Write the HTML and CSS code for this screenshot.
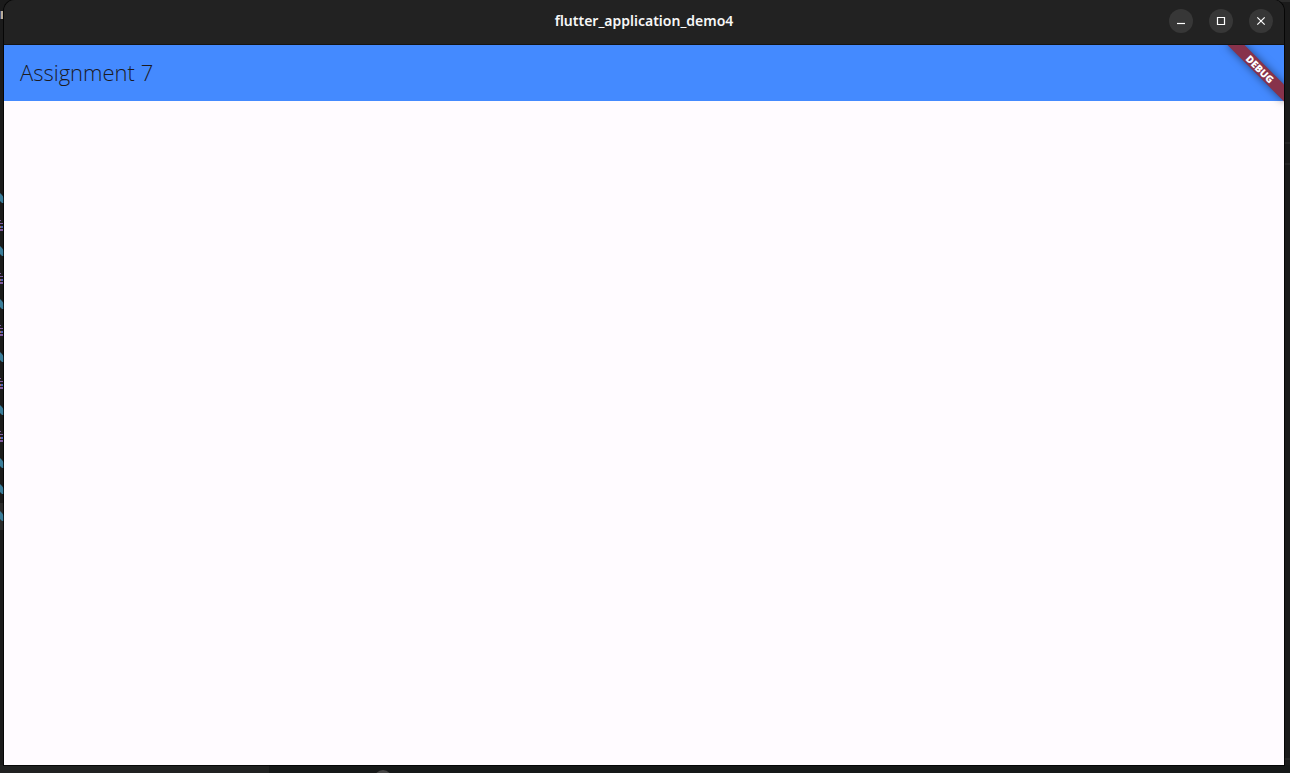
FILE: index.html
```html
<!DOCTYPE html>
<html lang="en">
<head>
<meta charset="utf-8">
<meta name="viewport" content="width=device-width, initial-scale=1">
<title>flutter_application_demo4</title>
<link rel="stylesheet" href="styles.css">
</head>
<body>
<!-- Editor showing behind the window edges -->
<svg class="backdrop" aria-hidden="true">
  <defs>
    <path id="dart" d="M0 -5L2 -3L4 0V5H2L0 3Z" fill="#3b7c99"/>
    <g id="lines">
      <path d="M0 -6h1v1h-1zM0 -3h3v1h-3zM0 3h3v2h-3z" fill="#815ba0"/>
      <path d="M0 0h1v2h-1z" fill="#a26b62"/>
      <path d="M1 0h2v2h-2z" fill="#4e63b3"/>
    </g>
  </defs>
  <rect y="503" width="4" height="27" fill="#2b2b2b"/>
  <path d="M0 11h1v8h-1z" fill="#465277"/>
  <path d="M1 11h2v8h-2z" fill="#b8ab98"/>
  <use href="#dart" y="198"/><use href="#lines" y="226"/>
  <use href="#dart" y="251"/><use href="#lines" y="279"/>
  <use href="#dart" y="304"/><use href="#lines" y="331"/>
  <use href="#dart" y="357"/><use href="#lines" y="384"/>
  <use href="#dart" y="410"/><use href="#lines" y="437"/>
  <use href="#dart" y="463"/><use href="#dart" y="489"/><use href="#dart" y="516"/>
  <rect y="765" width="269" height="8" fill="#202121"/>
  <rect x="269" y="765" width="100%" height="8" fill="#161818"/>
  <circle cx="383" cy="779" r="9" fill="#464646"/>
  <rect x="1200" width="90" height="2" fill="#2b2b2b"/>
  <path d="M1284 143h6M1284 164h6M1284 759h6" stroke="#303030"/>
</svg>
<div class="window">
  <header class="titlebar">
    <h1 class="title">flutter_application_demo4</h1>
    <div class="controls">
      <button class="control" type="button" aria-label="Minimize">
        <svg viewBox="0 0 24 24"><path d="M8 14.5h8"/></svg>
      </button>
      <button class="control" type="button" aria-label="Maximize">
        <svg viewBox="0 0 24 24"><path d="M8.5 8.5h7v7h-7z"/></svg>
      </button>
      <button class="control" type="button" aria-label="Close">
        <svg viewBox="0 0 24 24"><path d="M8.3 8.3l7.4 7.4M15.7 8.3l-7.4 7.4"/></svg>
      </button>
    </div>
  </header>
  <div class="appbar">
    <h2 class="heading">Assignment 7</h2>
    <div class="corner"><span class="ribbon">DEBUG</span></div>
  </div>
  <main class="content"></main>
</div>
</body>
</html>
```
FILE: styles.css
```css
* {
  box-sizing: border-box;
}

body {
  margin: 0;
  min-height: 100vh;
  padding: 0 6px 8px 4px;
  display: flex;
  background: #1b1b1b;
  font-family: "Noto Sans", "Open Sans", sans-serif;
}

.backdrop {
  position: absolute;
  inset: 0;
  width: 100%;
  height: 100%;
}

.window {
  position: relative;
  flex: 1;
  display: flex;
  flex-direction: column;
  border-radius: 11px 11px 0 0;
  box-shadow: 0 0 0 1px rgba(0, 0, 0, 0.75);
}

.titlebar {
  height: 45px;
  padding: 0 11px 3px;
  display: grid;
  grid-template-columns: 1fr auto 1fr;
  align-items: center;
  background: #222222;
  border-bottom: 1px solid #141414;
  border-radius: 11px 11px 0 0;
}

.title {
  grid-column: 2;
  margin: 0;
  color: #f7f7f7;
  font-size: 14px;
  font-weight: 600;
  line-height: 20px;
}

.controls {
  display: flex;
  justify-content: flex-end;
  gap: 16px;
}

.control {
  width: 24px;
  height: 24px;
  padding: 0;
  border: 0;
  border-radius: 50%;
  background: #373737;
}

.control svg {
  display: block;
  fill: none;
  stroke: #ffffff;
  stroke-width: 1.2;
}

.appbar {
  position: relative;
  height: 56px;
  padding: 0 16px 2px;
  display: flex;
  align-items: center;
  background: #448aff;
}

.heading {
  margin: 0;
  color: #1c1b1f;
  font-family: "Open Sans", "Noto Sans", sans-serif;
  font-size: 22px;
  font-weight: 300;
  line-height: 28px;
}

.corner {
  position: absolute;
  top: 0;
  right: 0;
  width: 80px;
  height: 80px;
  overflow: hidden;
}

/* Diagonal band centred 24px in from both sides of the corner */
.ribbon {
  position: absolute;
  top: 18px;
  right: -16px;
  width: 80px;
  height: 12px;
  transform: rotate(45deg);
  background: #87324b;
  box-shadow: 0 0 8px rgba(0, 0, 0, 0.5);
  color: #ffffff;
  font-size: 10px;
  font-weight: 900;
  line-height: 12px;
  text-align: center;
}

.content {
  flex: 1;
  background: #fffbff;
}
```
